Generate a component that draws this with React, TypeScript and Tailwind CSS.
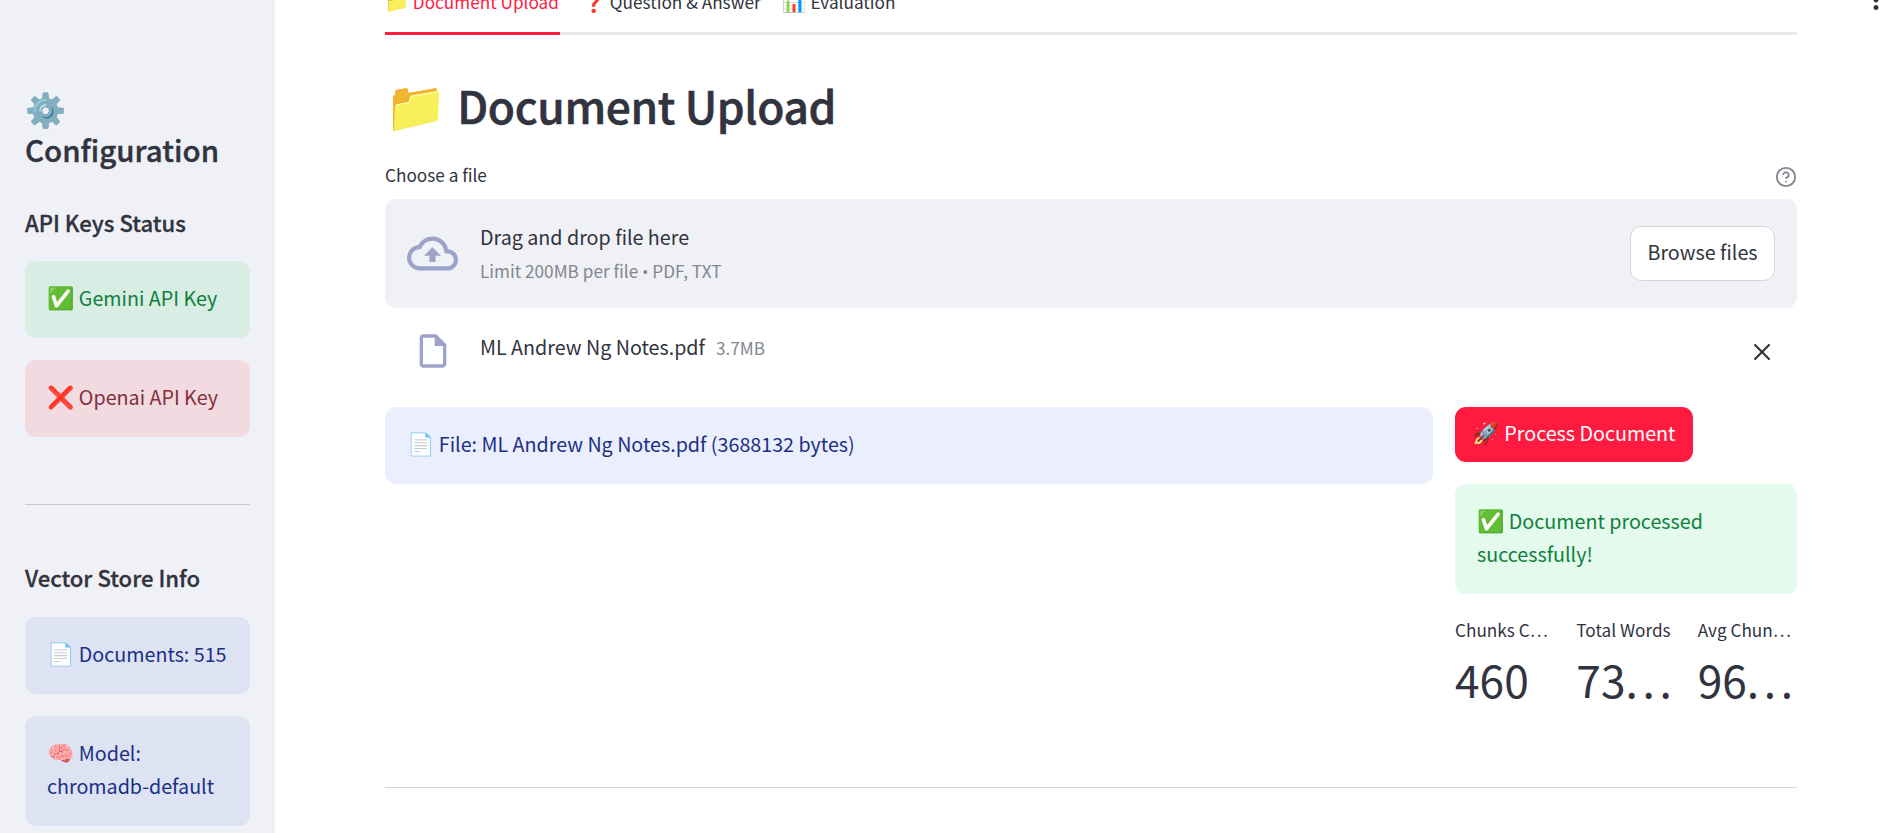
import React from "react";
import { CircleHelp, X } from "lucide-react";
import { MdMoreVert, MdOutlineCloudUpload, MdOutlineInsertDriveFile } from "react-icons/md";

function Emoji({ children, className = "" }: { children: string; className?: string }) {
  return <span className={`font-['Noto_Color_Emoji'] font-normal leading-none tracking-normal ${className}`}>{children}</span>;
}

function Alert({ emoji, className, emojiClass = "", children }: { emoji: string; className: string; emojiClass?: string; children: React.ReactNode }) {
  return (
    <div className={`rounded-[11px] px-[22px] pt-[20px] pb-[24px] text-[19.7px] leading-[33px] ${className}`}>
      <Emoji className={`text-[22px] ${emojiClass}`}>{emoji}</Emoji> {children}
    </div>
  );
}

function Metric({ label, value, cut = false }: { label: string; value: string; cut?: boolean }) {
  return (
    <div className="min-w-0 whitespace-nowrap">
      <div className="h-[28px] text-[17.2px] leading-[28px]">{label}</div>
      <div className="h-[71px] text-[44.3px] leading-[70px]">
        {value}
        {cut && <span className="tracking-[4.7px]">...</span>}
      </div>
    </div>
  );
}

function Sidebar() {
  return (
    <aside className="w-[275px] shrink-0 bg-[#f0f1f6] px-[25px] pt-[94px]">
      <h2 className="text-[29.5px] font-medium leading-[40px] [-webkit-text-stroke:0.4px_#31333f]">
        <Emoji className="block h-[35px] text-[33px] leading-[40px]">⚙️</Emoji>
        Configuration
      </h2>
      <h3 className="mt-[37px] mb-[22px] text-[22.1px] font-medium leading-[33px] [-webkit-text-stroke:0.3px_#31333f]">API Keys Status</h3>
      <div className="flex flex-col gap-[22px]">
        <Alert emoji="✅" emojiClass="[filter:hue-rotate(10deg)_saturate(1.25)]" className="bg-[#d8ede4] text-[#0f803c]">Gemini API Key</Alert>
        <Alert emoji="❌" emojiClass="saturate-[1.4]" className="bg-[#f1dae0] text-[#852f3d]">Openai API Key</Alert>
      </div>
      <hr className="mt-[67px] border-[#cacbd2]" />
      <h3 className="mt-[56px] mb-[23px] text-[22.1px] font-medium leading-[33px] [-webkit-text-stroke:0.3px_#31333f]">Vector Store Info</h3>
      <div className="flex flex-col gap-[22px]">
        <Alert emoji="📄" className="bg-[#dde3f2] text-[#1c2f87]">Documents: 515</Alert>
        <Alert emoji="🧠" className="bg-[#dde3f2] text-[#1c2f87]">
          Model:
          <br />
          chromadb-default
        </Alert>
      </div>
    </aside>
  );
}

export default function App() {
  return (
    <div className="flex h-[833px] overflow-hidden bg-white font-['Noto_Sans_CJK_SC','Noto_Color_Emoji',sans-serif] text-[#31333f]">
      <Sidebar />
      <main className="ml-[110px] w-[1412px] shrink-0">
        <nav className="flex h-[35px] gap-[22px] border-b-[3px] border-[#eaeaeb] text-[17.2px]">
          <div className="-mt-[13px] h-[48px] w-[175px] shrink-0 whitespace-nowrap border-b-[3px] border-[#ff1b3f] leading-[29px] text-[#ff1b3f]">
            <Emoji className="text-[19.25px] [filter:hue-rotate(8deg)_saturate(1.15)_brightness(1.03)]">📁</Emoji> Document Upload
          </div>
          <div className="-mt-[13px] whitespace-nowrap leading-[29px]">
            <Emoji className="text-[19.25px] saturate-[1.4]">❓</Emoji> Question &amp; Answer
          </div>
          <div className="-mt-[13px] whitespace-nowrap leading-[29px]">
            <Emoji className="text-[19.25px] saturate-[1.3]">📊</Emoji> Evaluation
          </div>
        </nav>
        <h1 className="mt-[40px] text-[44.3px] font-medium leading-[60px] tracking-[-0.35px] [-webkit-text-stroke:0.6px_#31333f]">
          <Emoji className="text-[49.5px] [filter:hue-rotate(8deg)_saturate(1.15)_brightness(1.03)]">📁</Emoji>
          <span className="ml-px"> Document Upload</span>
        </h1>
        <div className="mt-[25px] flex h-[39px] justify-between">
          <span className="text-[17.2px] leading-[29px]">Choose a file</span>
          <CircleHelp className="mt-[6px] size-[22px] text-[#83858f]" />
        </div>
        <section className="flex h-[109px] items-center rounded-[11px] bg-[#f0f1f6] px-[22px]">
          <MdOutlineCloudUpload className="size-[51px] shrink-0 text-[#9ca3c9]" />
          <div className="ml-[22px] flex-1 pt-[2px]">
            <div className="text-[19.7px] leading-[34px]">Drag and drop file here</div>
            <div className="text-[17.2px] leading-[34px] text-[#83858f]">
              Limit 200MB per file <span className="font-['Open_Sans']">•</span> PDF, TXT
            </div>
          </div>
          <button className="h-[55px] w-[145px] rounded-[11px] border border-[#d6d6d9] bg-white pb-[4px] text-[19.7px]">Browse files</button>
        </section>
        <div className="flex h-[99px] items-start pt-[22px]">
          <MdOutlineInsertDriveFile className="ml-[28px] mt-[1px] size-[40px] shrink-0 text-[#9ca3c9]" />
          <span className="ml-[27px] text-[19.7px] leading-[33px]">ML Andrew Ng Notes.pdf</span>
          <span className="ml-[11px] flex-1 text-[17.2px] leading-[35px] text-[#83858f]">3.7MB</span>
          <X className="mr-[21px] mt-[8px] size-[28px]" strokeWidth={1.8} />
        </div>
        <div className="flex items-start gap-[22px]">
          <Alert emoji="📄" className="w-[1048px] bg-[#ebeffd] text-[#1c2f87]">File: ML Andrew Ng Notes.pdf (3688132 bytes)</Alert>
          <div className="w-[342px]">
            <button className="mb-[22px] block h-[55px] w-[238px] whitespace-nowrap rounded-[11px] bg-[#ff1b3f] pb-[4px] text-[19.7px] text-white">
              <Emoji className="text-[22px]">🚀</Emoji> Process Document
            </button>
            <Alert emoji="✅" emojiClass="[filter:hue-rotate(10deg)_saturate(1.25)]" className="bg-[#e4faed] text-[#0f803c]">
              Document processed successfully!
            </Alert>
            <div className="mt-[22px] grid grid-cols-3 gap-[22px]">
              <Metric label="Chunks C…" value="460" />
              <Metric label="Total Words" value="73" cut />
              <Metric label="Avg Chun…" value="96" cut />
            </div>
          </div>
        </div>
        <hr className="mt-[72px] border-[#d6d6d9]" />
      </main>
      <MdMoreVert className="-mt-[15px] ml-[64px] size-[30px] shrink-0" />
    </div>
  );
}
